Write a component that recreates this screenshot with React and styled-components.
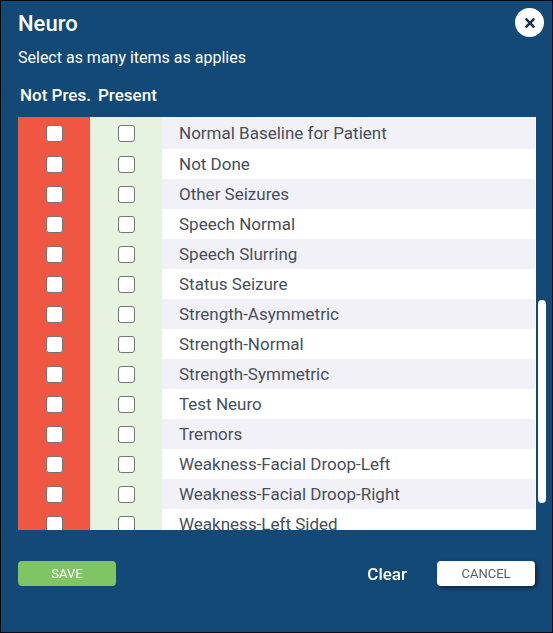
import React, { useState } from "react";
import styled, { createGlobalStyle } from "styled-components";

const items = [
  "Normal Baseline for Patient",
  "Not Done",
  "Other Seizures",
  "Speech Normal",
  "Speech Slurring",
  "Status Seizure",
  "Strength-Asymmetric",
  "Strength-Normal",
  "Strength-Symmetric",
  "Test Neuro",
  "Tremors",
  "Weakness-Facial Droop-Left",
  "Weakness-Facial Droop-Right",
  "Weakness-Left Sided",
];

const App = () => {
  const [answers, setAnswers] = useState({});

  // an item is either present or not present, never both
  const toggle = (item, value) => {
    setAnswers({ ...answers, [item]: answers[item] === value ? null : value });
  };

  return (
    <>
      <GlobalStyle />
      <Dialog role="dialog" aria-labelledby="dialog-title">
        <Header>
          <div>
            <Title id="dialog-title">Neuro</Title>
            <SubTitle>Select as many items as applies</SubTitle>
          </div>
          <CloseButton aria-label="Close">
            <svg width="12" height="12" viewBox="0 0 12 12">
              <path
                d="M2.4 2.4 L9.6 9.6 M9.6 2.4 L2.4 9.6"
                stroke="#16304f"
                strokeWidth="2.6"
                strokeLinecap="round"
              />
            </svg>
          </CloseButton>
        </Header>

        <ListArea>
          <Table>
            <TableHead>
              <Row>
                <HeadCell $left="2px">Not Pres.</HeadCell>
                <HeadCell $left="8px">Present</HeadCell>
              </Row>
            </TableHead>
            <TableBody>
              {items.map((item) => (
                <ItemRow key={item}>
                  <CheckCell $color="#f05742">
                    <CheckBox
                      type="checkbox"
                      aria-label={`${item} not present`}
                      checked={answers[item] === "no"}
                      onChange={() => toggle(item, "no")}
                    />
                  </CheckCell>
                  <CheckCell $color="#e5f3df">
                    <CheckBox
                      type="checkbox"
                      aria-label={`${item} present`}
                      checked={answers[item] === "yes"}
                      onChange={() => toggle(item, "yes")}
                    />
                  </CheckCell>
                  <NameCell>{item}</NameCell>
                </ItemRow>
              ))}
            </TableBody>
          </Table>
          <Track>
            <Thumb />
          </Track>
        </ListArea>

        <Footer>
          <SaveButton>SAVE</SaveButton>
          <ClearButton onClick={() => setAnswers({})}>Clear</ClearButton>
          <CancelButton>CANCEL</CancelButton>
        </Footer>
      </Dialog>
    </>
  );
};

const GlobalStyle = createGlobalStyle`
  * {
    box-sizing: border-box;
  }
  body {
    margin: 0;
  }
  body, button {
    font-family: Roboto, "Liberation Sans", sans-serif;
  }
`;

const Dialog = styled.div`
  display: flex;
  flex-direction: column;
  height: 100vh;
  border: 1px solid #050a10;
  background-color: #134977;
  color: #fff;
`;

const Header = styled.div`
  display: flex;
  justify-content: space-between;
  align-items: flex-start;
  padding: 7px 8px 0 17px;
`;

const Title = styled.h1`
  margin: 0;
  padding-top: 2px;
  font-size: 22px;
  font-weight: 500;
  line-height: 28px;
`;

const SubTitle = styled.p`
  margin: 8px 0 0;
  font-size: 16px;
  line-height: 24px;
`;

const CloseButton = styled.button`
  display: flex;
  justify-content: center;
  align-items: center;
  width: 29px;
  height: 29px;
  padding: 0;
  border: none;
  border-radius: 50%;
  background-color: #fff;
  cursor: pointer;
`;

const ListArea = styled.div`
  display: flex;
  flex: 1;
  min-height: 0;
  padding: 10px 6px 0 17px;
`;

const Table = styled.table`
  display: flex;
  flex-direction: column;
  flex: 1;
  min-width: 0;
`;

const TableHead = styled.thead`
  display: block;
  padding-bottom: 7px;
`;

const TableBody = styled.tbody`
  display: block;
  flex: 1;
  min-height: 0;
  padding-right: 1px;
  overflow-y: auto;
  scrollbar-width: none;
  background-color: #fff;
`;

const Row = styled.tr`
  display: grid;
  grid-template-columns: 72px 72px 1fr;
`;

const ItemRow = styled(Row)`
  height: 30px;
  background-color: #fff;

  &:nth-child(odd) {
    background-color: #f2f1f7;
  }
  &:first-child {
    height: 32px;
  }
`;

const HeadCell = styled.th`
  padding: 0 0 0 ${(props) => props.$left};
  font-size: 17px;
  font-weight: 500;
  line-height: 30px;
  text-align: left;
  white-space: nowrap;
`;

const CheckCell = styled.td`
  display: flex;
  justify-content: center;
  align-items: center;
  padding: 0;
  background-color: ${(props) => props.$color};
`;

const CheckBox = styled.input`
  appearance: none;
  width: 17px;
  height: 17px;
  margin: 0;
  border: 1px solid #767676;
  border-radius: 3px;
  background-color: #fff;

  &:checked {
    background-color: #134977;
    box-shadow: inset 0 0 0 3px #fff;
  }
`;

const NameCell = styled.td`
  display: flex;
  align-items: center;
  padding: 0 0 0 17px;
  color: #474e58;
  font-size: 17px;
  white-space: nowrap;
`;

const Track = styled.div`
  display: grid;
  grid-template-rows: 183fr 203fr 27fr;
  width: 10px;
  padding: 37px 0 0 2px;
`;

const Thumb = styled.div`
  grid-row: 2;
  border-radius: 4px;
  background-color: #fff;
`;

const Footer = styled.div`
  display: flex;
  align-items: center;
  padding: 31px 17px 46px;
`;

const Button = styled.button`
  width: 98px;
  height: 25px;
  padding: 0;
  border: none;
  border-radius: 4px;
  font-size: 13px;
  cursor: pointer;
`;

const SaveButton = styled(Button)`
  background-color: #80c563;
  color: #fff;
`;

const ClearButton = styled.button`
  height: 25px;
  margin-left: auto;
  padding: 0;
  border: none;
  background-color: transparent;
  color: #fff;
  font-size: 17px;
  font-weight: 500;
  cursor: pointer;
`;

const CancelButton = styled(Button)`
  margin-left: 30px;
  background-color: #fff;
  box-shadow: 2px 2px 4px rgba(0, 0, 0, 0.5);
  color: #575d66;
`;

export default App;
